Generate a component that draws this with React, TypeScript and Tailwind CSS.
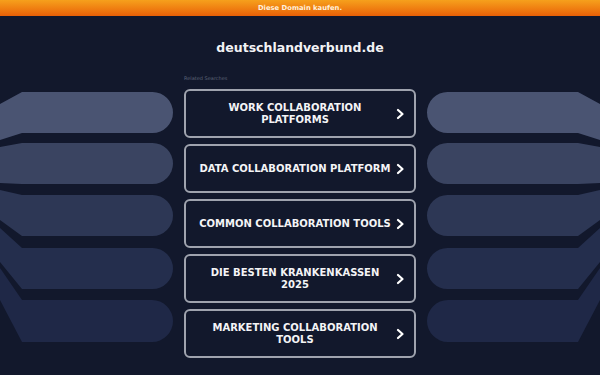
const items = [
  "WORK COLLABORATION PLATFORMS",
  "DATA COLLABORATION PLATFORM",
  "COMMON COLLABORATION TOOLS",
  "DIE BESTEN KRANKENKASSEN 2025",
  "MARKETING COLLABORATION TOOLS",
];

// top, bottom, offset of top edge at the screen edge, offset of bottom edge
const bars = [
  { t: 92, b: 133, ot: 12, ob: 7, c: "#4a5472" },
  { t: 143, b: 184, ot: 4, ob: -1, c: "#3a4461" },
  { t: 195, b: 236, ot: -5, ob: -16, c: "#2d3755" },
  { t: 248, b: 289, ot: -20, ob: -27, c: "#242e4d" },
  { t: 300, b: 342, ot: -32, ob: -42, c: "#1f2847" },
];

function Wings() {
  return (
    <svg className="absolute inset-0 pointer-events-none" width="600" height="375" viewBox="0 0 600 375">
      {bars.map((bar, i) => {
        const r = (bar.b - bar.t) / 2;
        const left = `M0,${bar.t + bar.ot} L22,${bar.t} L${173 - r},${bar.t} A${r},${r} 0 0 1 ${173 - r},${bar.b} L22,${bar.b} L0,${bar.b + bar.ob} Z`;
        const right = `M600,${bar.t + bar.ot} L578,${bar.t} L${427 + r},${bar.t} A${r},${r} 0 0 0 ${427 + r},${bar.b} L578,${bar.b} L600,${bar.b + bar.ob} Z`;
        return (
          <g key={i} fill={bar.c}>
            <path d={left} />
            <path d={right} />
          </g>
        );
      })}
    </svg>
  );
}

export default function App() {
  return (
    <main className="relative w-full h-[375px] overflow-hidden bg-[#12182c] font-['DejaVu_Sans',sans-serif]">
      <Wings />
      <div className="relative flex flex-col items-center">
        <div className="w-full h-4 bg-gradient-to-b from-[#f6a01c] to-[#e85f06] flex items-center justify-center">
          <a className="text-[6.8px] font-bold text-[#fff1dc]">Diese Domain kaufen.</a>
        </div>
        <h1 className="mt-[23px] text-[12.5px] leading-[18px] font-bold text-[#f2f2f5]">deutschlandverbund.de</h1>
        <div className="w-[232px] mt-[18px]">
          <p className="text-[5px] leading-[6px] text-[#5d6478]">Related Searches</p>
        </div>
        <div className="mt-2 flex flex-col gap-[6px]">
          {items.map((label) => (
            <a
              key={label}
              className="w-[232px] h-[49px] border-2 border-[#9fa3ae] rounded-[6px] bg-[#12182c] flex items-center pl-[10px] pr-[10px]"
            >
              <span className="flex-1 px-[1px] mr-[2px] text-center text-[10px] leading-[12px] font-bold text-[#f4f4f6]">{label}</span>
              <svg width="8" height="12" viewBox="0 0 8 12" className="shrink-0">
                <polyline points="2,2 6.5,6 2,10" fill="none" stroke="#ffffff" strokeWidth="2.2" strokeLinecap="round" strokeLinejoin="round" />
              </svg>
            </a>
          ))}
        </div>
      </div>
    </main>
  );
}
